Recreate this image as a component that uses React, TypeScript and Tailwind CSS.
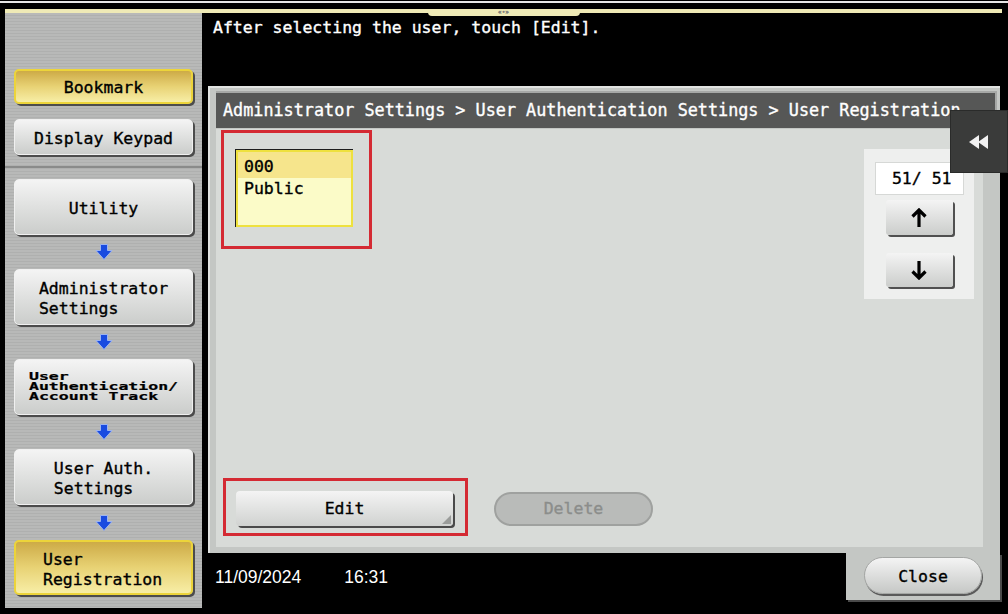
import React from 'react';
import clsx from 'clsx';

const mono = "font-['DejaVu_Sans_Mono','Liberation_Mono',monospace]";

const FlowArrow = () => (
  <div className="flex h-full items-center justify-center">
    <svg width="18" height="16" viewBox="0 0 18 16">
      <path d="M5.5 0.5 H12.5 V6.5 H17 L9 15.5 L1 6.5 H5.5 Z" fill="#1a4be0" stroke="#9db4f0" strokeWidth="1" />
    </svg>
  </div>
);

interface SideButtonProps {
  active?: boolean;
  className?: string;
  children: React.ReactNode;
}

const SideButton: React.FC<SideButtonProps> = ({ active, className, children }) => (
  <div
    className={clsx(
      'mx-auto flex w-[179px] shrink-0 items-center justify-center rounded-[5px] pt-[4px] text-black shadow-[2px_2px_0_#4c4c4c]',
      active
        ? 'border-2 border-[#ecd43a] bg-linear-to-b from-[#cdab46] via-[#e8d274] to-[#f7eea6]'
        : 'border border-[#f0f0f0] bg-linear-to-b from-[#f4f4f4] to-[#cbcdcb]',
      className
    )}
  >
    {children}
  </div>
);

const PagerArrow = ({ down }: { down?: boolean }) => (
  <svg width="16" height="20" viewBox="0 0 16 20" className={down ? 'rotate-180' : ''}>
    <path d="M8 2 V19 M1.5 8.5 L8 2 L14.5 8.5" stroke="#000" strokeWidth="3.2" fill="none" strokeLinejoin="miter" />
  </svg>
);

const Sidebar = () => (
  <div className="ml-[5px] flex h-[595px] w-[197px] shrink-0 flex-col bg-[repeating-linear-gradient(180deg,#b8b9b8_0px,#b8b9b8_2px,#afb0af_2px,#afb0af_3px)] pt-[56px] text-[16.5px]">
    <SideButton active className="h-[35px]">Bookmark</SideButton>
    <SideButton className="mt-[15px] h-[36px]">Display Keypad</SideButton>
    <div className="mt-[11px] h-[2px] bg-[#8a8b8a]" />
    <SideButton className="mt-[11px] h-[56px]">Utility</SideButton>
    <div className="h-[34px]"><FlowArrow /></div>
    <SideButton className="h-[56px]">
      <div className="text-left leading-[20px]">Administrator<br />Settings</div>
    </SideButton>
    <div className="h-[34px]"><FlowArrow /></div>
    <SideButton className="h-[56px] !justify-start !pt-0 pl-[14px]">
      <div className="origin-left scale-y-[0.62] text-left text-[16.5px] font-bold leading-[16px]">
        User<br />Authentication/<br />Account Track
      </div>
    </SideButton>
    <div className="h-[34px]"><FlowArrow /></div>
    <SideButton className="h-[56px]">
      <div className="text-left leading-[20px]">User Auth.<br />Settings</div>
    </SideButton>
    <div className="h-[35px]"><FlowArrow /></div>
    <SideButton active className="h-[55px] !justify-start pl-[27px]">
      <div className="text-left leading-[20px]">User<br />Registration</div>
    </SideButton>
  </div>
);

const App: React.FC = () => {
  return (
    <div className={clsx('relative flex h-[614px] w-[1008px] flex-col overflow-hidden bg-black [-webkit-text-stroke:0.35px_currentColor]', mono)}>
      <div className="mt-px h-[2px] shrink-0 bg-[#e6e6e6]" />
      <div className="h-[6px] shrink-0" />
      <div className="z-10 ml-[5px] mr-[6px] flex h-[4px] shrink-0 justify-center bg-[#efeab6]">
        <div className="flex h-[7px] w-[152px] items-start justify-center rounded-b-[4px] bg-[#efeab6] text-[6px] leading-[6px] text-[#777]">
          «•»
        </div>
      </div>

      <div className="flex flex-1">
        <Sidebar />

        <div className="ml-[6px] flex flex-1 flex-col">
          <div className="h-[73px] shrink-0 pl-[5px] pt-[5px] text-[16.5px] leading-[20px] text-white">
            After selecting the user, touch [Edit].
          </div>

          <div className="relative flex h-[467px] w-[792px] shrink-0 flex-col border-l-2 border-t-2 border-[#e2e4e2] bg-[#c4c7c4] pl-[6px] pr-[3px] pt-[3px]">
            <div className="flex h-[37px] shrink-0 items-center overflow-hidden whitespace-nowrap border-r-2 border-t-2 border-[#a6a8a6] bg-[#565756] pl-[7px] text-[16.8px] text-white">
              Administrator Settings &gt; User Authentication Settings &gt; User Registration
            </div>

            <div className="relative mr-[14px] mt-px flex h-[418px] flex-col justify-between bg-[#d8dbd8] pb-[21px] pt-[20px] text-[16.5px]">
              <div className="flex items-start">
                <div className="ml-[19px] h-[78px] w-[118px] border-l border-t border-[#1e1e1e]">
                  <div className="flex h-full flex-col border-2 border-[#eee13e] bg-[#fbfbc8]">
                    <div className="h-[26px] bg-[#f6e58c] pl-[6px] pt-[6px] leading-[18px]">000</div>
                    <div className="pl-[6px] pt-[2px] leading-[18px]">Public</div>
                  </div>
                </div>

                <div className="ml-auto mr-[9px] flex h-[150px] w-[110px] flex-col items-center bg-[#eeefee] pt-[13px]">
                  <div className="flex h-[33px] w-[89px] items-center justify-end border border-[#d6d8d6] bg-white pr-[11px] pt-[2px]">
                    51/ 51
                  </div>
                  <div className="mt-[5px] flex h-[35px] w-[67px] items-center justify-center rounded-[3px] bg-linear-to-b from-[#f4f4f4] to-[#cbcdcb] shadow-[2px_2px_0_#505050]">
                    <PagerArrow />
                  </div>
                  <div className="mt-[18px] flex h-[34px] w-[67px] items-center justify-center rounded-[3px] bg-linear-to-b from-[#f4f4f4] to-[#cbcdcb] shadow-[2px_2px_0_#505050]">
                    <PagerArrow down />
                  </div>
                </div>
              </div>

              <div className="flex items-center">
                <div className="relative ml-[20px] flex h-[35px] w-[217px] items-center justify-center rounded-[4px] bg-linear-to-b from-[#f4f4f4] to-[#d0d2d0] pt-[2px] text-black shadow-[2px_2px_0_#4a4a4a]">
                  Edit
                  <svg className="absolute bottom-[2px] right-[2px]" width="9" height="9" viewBox="0 0 9 9">
                    <path d="M9 0 V9 H0 Z" fill="#9a9c9a" />
                  </svg>
                </div>
                <div className="ml-[41px] flex h-[34px] w-[159px] items-center justify-center rounded-full border-2 border-[#9fa19f] bg-[#b9bbb9] pt-[2px] text-[#8b8d8b]">
                  Delete
                </div>
              </div>

              <div className="absolute left-[5px] top-[1px] h-[119px] w-[151px] border-[3px] border-[#d42a33]" />
              <div className="absolute left-[7px] top-[349px] h-[58px] w-[245px] border-[3px] border-[#d42a33]" />
            </div>

            <div className="absolute left-[740px] top-[22px] flex h-[63px] w-[58px] items-center justify-center border border-[#2a2b2a] bg-[#3a3b3a]">
              <svg width="21" height="14" viewBox="0 0 21 14">
                <polygon points="0,7 10,0 10,14" fill="#f2f2f2" />
                <polygon points="9,7 19,0 19,14" fill="#f2f2f2" />
              </svg>
            </div>
          </div>

          <div className="flex flex-1">
            <div className="flex pl-[7px] pt-[14px] font-['Liberation_Sans',Arial,sans-serif] text-[17.5px] leading-[20px] text-white [-webkit-text-stroke:0px]">
              <span>11/09/2024</span>
              <span className="ml-[43px]">16:31</span>
            </div>
            <div className="ml-auto mr-[8px] h-[47px] w-[154px] bg-[#c4c7c4] pl-[18px] pt-[4px] shadow-[2px_2px_0_#4a4a4a]">
              <div className="flex h-[37px] w-[118px] items-center justify-center rounded-full border border-[#a4a6a4] bg-linear-to-b from-[#f4f4f4] to-[#c6c8c6] pt-[4px] text-[16.5px] text-black shadow-[1px_2px_0_#5a5a5a]">
                Close
              </div>
            </div>
          </div>
        </div>
      </div>
    </div>
  );
};

export default App;
